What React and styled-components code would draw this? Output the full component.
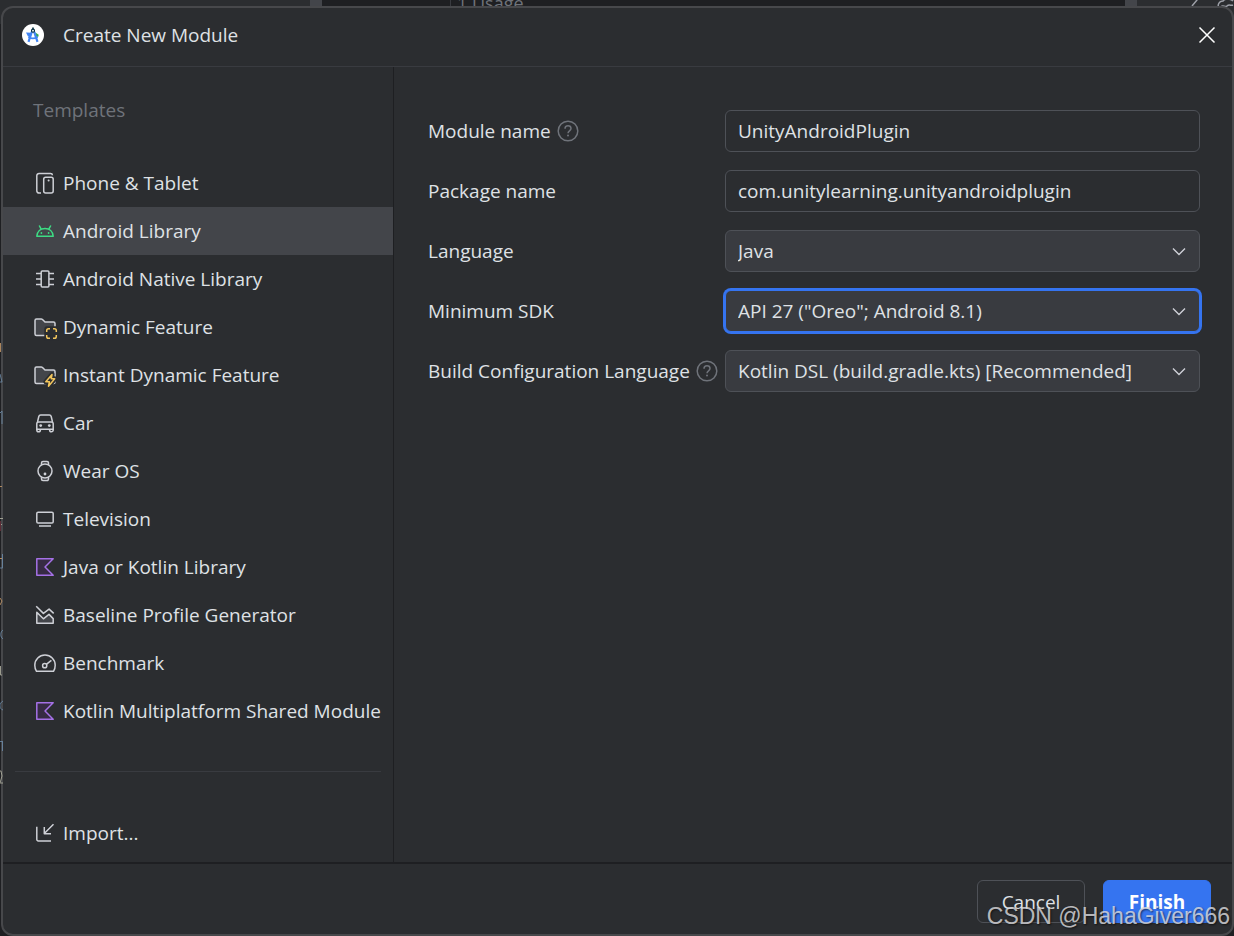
import styled, { createGlobalStyle, css } from "styled-components";

const GlobalStyle = createGlobalStyle`
  * {
    box-sizing: border-box;
  }

  body {
    margin: 0;
    background: #1e1f22;
    color: #dfe1e5;
    font-family: "Open Sans", "Noto Sans", sans-serif;
    font-size: 19px;
    line-height: 24px;
  }
`;

const Screen = styled.div`
  position: relative;
  display: flex;
  min-height: 100vh;
  padding: 6px 0 0 1px;
  overflow: hidden;
`;

/* slice of the editor that stays visible around the dialog */
const EditorTop = styled.div`
  position: absolute;
  top: 0;
  left: 0;
  right: 0;
  height: 24px;
  display: grid;
  grid-template-columns: 310px 12px 1fr 12px 97px;
  background: #2b2d30;
`;

const EditorGap = styled.div`
  background: ${({ $light }) => ($light ? "#43454a" : "#1e1f22")};
  padding-left: ${({ $light }) => ($light ? "0" : "128px")};
`;

const Usage = styled.span`
  display: block;
  border-left: 1px solid #393b40;
  padding-left: 6px;
  margin-top: -9px;
  font-size: 18px;
  color: #6f737a;
`;

const EditorTools = styled.div`
  display: flex;
  justify-content: flex-end;
  gap: 12px;
  color: #9da0a8;

  svg {
    margin-top: -8px;
  }
`;

const EditorEdge = styled.svg`
  position: absolute;
  top: 0;
  left: 0;
  width: 3px;
  height: 800px;
  fill: none;
  stroke-width: 1;
  opacity: 0.8;
`;

const Dialog = styled.div`
  position: relative;
  flex: 1;
  display: flex;
  flex-direction: column;
  min-width: 0;
  border: 2px solid #47484b;
  border-radius: 12px;
  background: #2b2d30;
  overflow: hidden;
`;

const Header = styled.header`
  display: flex;
  align-items: center;
  gap: 19px;
  height: 59px;
  padding: 0 16px 4px 19px;
  border-bottom: 1px solid #393b40;

  h1 {
    flex: 1;
    margin: 0;
    font-size: 19px;
    font-weight: 400;
  }
`;

const CloseButton = styled.button`
  display: flex;
  padding: 0;
  border: 0;
  background: none;
  color: #fff;
  cursor: pointer;
`;

const Body = styled.div`
  flex: 1;
  display: flex;
`;

const Sidebar = styled.nav`
  flex: 0 0 391px;
  padding-bottom: 5px;
  border-right: 1px solid #1e1f22;

  h2 {
    margin: 0;
    padding: 31px 30px 37px;
    font-size: 19px;
    font-weight: 400;
    color: #6f737a;
  }

  ul {
    margin: 0;
    padding: 0;
    list-style: none;
  }

  hr {
    margin: 36px 12px 37px;
    border: 0;
    border-top: 1px solid #393b40;
  }
`;

const Template = styled.button`
  display: flex;
  align-items: center;
  gap: 6px;
  width: 100%;
  height: 48px;
  padding: 0 0 0 30px;
  border: 0;
  background: ${({ $active }) => ($active ? "#43454a" : "transparent")};
  color: inherit;
  font: inherit;
  white-space: nowrap;
  cursor: pointer;
`;

const Icon = styled.svg.attrs({ viewBox: "0 0 24 24", "aria-hidden": true })`
  flex: none;
  width: 24px;
  height: 24px;
  overflow: visible;
  fill: none;
  stroke: ${({ $color }) => $color || "#ced0d6"};
  stroke-width: 1.5;
  stroke-linejoin: round;

  .solid {
    fill: #43454a;
  }

  .dot {
    fill: ${({ $color }) => $color || "#ced0d6"};
    stroke: none;
  }

  .accent {
    stroke: #f2c55c;
    fill: #2b2d30;
  }

  .backing {
    stroke: #2b2d30;
    stroke-width: 5;
  }
`;

const Form = styled.form`
  flex: 1;
  display: flex;
  flex-direction: column;
  gap: 18px;
  padding: 43px 32px 43px 34px;
`;

const Row = styled.div`
  display: grid;
  grid-template-columns: 297px 1fr;
  align-items: center;
`;

const Caption = styled.div`
  display: flex;
  align-items: center;
  gap: 6px;
  white-space: nowrap;
`;

const HelpButton = styled.button`
  display: flex;
  padding: 0;
  border: 0;
  background: none;
  cursor: pointer;
`;

const field = css`
  width: 100%;
  height: 42px;
  padding: 0 12px;
  border: 1px solid ${({ $focused }) => ($focused ? "#3574f0" : "#4e5157")};
  border-radius: 6px;
  box-shadow: ${({ $focused }) => ($focused ? "0 0 0 2px #3574f0" : "none")};
  color: inherit;
  font: inherit;
  outline: none;
`;

const TextInput = styled.input`
  ${field}
  background: #2b2d30;
`;

const SelectBox = styled.div`
  display: grid;
  align-items: center;

  select,
  svg {
    grid-area: 1 / 1;
  }

  svg {
    justify-self: end;
    margin-right: 14px;
    pointer-events: none;
  }
`;

const Select = styled.select`
  ${field}
  appearance: none;
  background: #393b40;
`;

const Footer = styled.footer`
  display: flex;
  justify-content: flex-end;
  gap: 18px;
  padding: 16px 21px 11px;
  border-top: 2px solid #1e1f22;
`;

const Button = styled.button`
  width: 108px;
  height: 43px;
  padding: 0;
  border: 1px solid ${({ $primary }) => ($primary ? "#3574f0" : "#4e5157")};
  border-radius: 6px;
  background: ${({ $primary }) => ($primary ? "#3574f0" : "transparent")};
  color: ${({ $primary }) => ($primary ? "#fff" : "inherit")};
  font: inherit;
  font-weight: ${({ $primary }) => ($primary ? 700 : 400)};
  cursor: pointer;
`;

const Watermark = styled.div`
  position: absolute;
  right: 4px;
  bottom: 6px;
  font-family: "Liberation Sans", Arial, sans-serif;
  font-size: 23px;
  line-height: 28px;
  color: rgba(225, 225, 228, 0.8);
  text-shadow: 1px 1px 2px rgba(0, 0, 0, 0.6);
  pointer-events: none;
`;

const PhoneIcon = () => (
  <Icon>
    <path d="M8 22H6a2.200 2.200 0 0 1-2.200-2.200V4.700A2.200 2.200 0 0 1 6 2.500h11.500a2 2 0 0 1 2 1.800" />
    <rect x="10.700" y="6.200" width="9.500" height="15.800" rx="2" />
    <circle className="dot" cx="15.600" cy="9.500" r="1" />
  </Icon>
);

const AndroidIcon = () => (
  <Icon $color="#3ddc84">
    <path d="M3.800 17.300C4.200 12.500 7.500 9.500 12 9.500s7.800 3 8.200 7.800z" />
    <path d="M6.200 6.500l2.100 3.900M17.800 6.500l-2.100 3.900" />
    <circle className="dot" cx="8.400" cy="14" r="0.900" />
    <circle className="dot" cx="15.600" cy="14" r="0.900" />
  </Icon>
);

const ChipIcon = () => (
  <Icon>
    <rect x="8.200" y="4" width="7.700" height="16" rx="1" />
    <path d="M3 6.500h5M3 12h5M3 17.500h5M16 6.500h5M16 12h5M16 17.500h5" />
  </Icon>
);

const Folder = () => (
  <path
    className="solid"
    d="M2 19V5.500A1.500 1.500 0 0 1 3.500 4h4.700a2 2 0 0 1 1.300.5L12 7h8.500A1.500 1.500 0 0 1 22 8.500V19a1.500 1.500 0 0 1-1.500 1.500h-17A1.500 1.500 0 0 1 2 19z"
  />
);

const DynamicIcon = () => (
  <Icon>
    <Folder />
    <rect x="13.800" y="13.800" width="9.500" height="9.500" className="backing" />
    <rect x="13" y="13" width="11" height="11" fill="#2b2d30" stroke="none" />
    <path
      className="accent"
      d="M13.700 17v-1.500a1.800 1.800 0 0 1 1.800-1.800H17M20 13.700h1.500a1.800 1.800 0 0 1 1.800 1.800V17M23.300 20v1.500a1.800 1.800 0 0 1-1.800 1.800H20M17 23.300h-1.500a1.800 1.800 0 0 1-1.800-1.800V20"
    />
  </Icon>
);

const InstantIcon = () => (
  <Icon>
    <Folder />
    <path className="backing" d="M19 11.500l-6.200 7.300h3.600l-.9 4.400 6.200-7.400h-3.500z" />
    <path className="accent" d="M19 11.500l-6.200 7.300h3.600l-.9 4.400 6.200-7.400h-3.500z" />
  </Icon>
);

const CarIcon = () => (
  <Icon>
    <path d="M4.500 11l1.300-5.500A2 2 0 0 1 7.700 4h8.600a2 2 0 0 1 1.900 1.500L19.500 11" />
    <path d="M3.800 18.200v-5.400a1.800 1.800 0 0 1 1.800-1.800h12.800a1.800 1.800 0 0 1 1.800 1.800v5.400z" />
    <path d="M3.800 18v1a1.700 1.700 0 0 0 3.600 0v-1M16.600 18v1a1.700 1.700 0 0 0 3.600 0v-1" />
    <circle className="dot" cx="7.700" cy="14.600" r="1.400" />
    <circle className="dot" cx="16.300" cy="14.600" r="1.400" />
  </Icon>
);

const WatchIcon = () => (
  <Icon>
    <circle cx="12" cy="12" r="7" />
    <path d="M8.500 6V3.900A1.500 1.500 0 0 1 10 2.400h4a1.500 1.500 0 0 1 1.500 1.500V6M8.500 18v2.100a1.500 1.500 0 0 0 1.500 1.500h4a1.500 1.500 0 0 0 1.500-1.500V18" />
    <circle className="dot" cx="12" cy="15" r="1.400" />
  </Icon>
);

const TvIcon = () => (
  <Icon>
    <rect x="3.800" y="5.200" width="16.400" height="10.800" rx="1.300" />
    <path d="M6 19h12" />
  </Icon>
);

const KotlinIcon = () => (
  <Icon $color="#a571e6">
    <path fill="#372b44" d="M3.800 3.800h16.400L12 12l8.200 8.200H3.800z" />
  </Icon>
);

const BaselineIcon = () => (
  <Icon>
    <path d="M3.200 3.200l7.200 7.200 5.700-4.300 4.600 4.300" />
    <path className="solid" d="M3.800 9.200l6.600 6.600 5.600-4.400 4.200 4.200v4.700H3.800z" />
  </Icon>
);

const BenchmarkIcon = () => (
  <Icon>
    <path d="M3.500 20.300C2.300 18.500 1.800 16.600 1.800 14.200a10.200 10.200 0 0 1 20.400 0c0 2.400-.5 4.300-1.700 6.100z" />
    <circle cx="11.700" cy="14.700" r="2.100" />
    <path d="M13.300 13.400l5.100-4" />
  </Icon>
);

const ImportIcon = () => (
  <Icon>
    <path d="M3.800 5.700v12.800a1.500 1.500 0 0 0 1.500 1.500H18" />
    <path d="M20.500 3.300l-9 9M11.300 6v6.700H18" />
  </Icon>
);

const ChevronIcon = () => (
  <svg width="14" height="14" viewBox="0 0 14 14" aria-hidden="true">
    <path d="M1 4.500l6 6 6-6" fill="none" stroke="#ced0d6" strokeWidth="1.400" />
  </svg>
);

const HelpIcon = () => (
  <svg width="22" height="22" viewBox="0 0 22 22" fill="none" stroke="#6f737a" strokeWidth="1.500">
    <circle cx="11" cy="11" r="9.800" />
    <path d="M8 8.700c0-1.700 1.300-2.900 3-2.900s3 1.100 3 2.700c0 2.300-3 2.300-3 4.700" />
    <circle cx="11" cy="15.500" r="1" fill="#6f737a" stroke="none" />
  </svg>
);

const StudioLogo = () => (
  <svg width="22" height="22" viewBox="0 0 22 22" aria-hidden="true">
    <circle cx="11" cy="11" r="11" fill="#fff" />
    <path d="M4 8.500l6 .3-1.500 5-2.600-1.500z" fill="#4285f4" />
    <path d="M13 8.200l3.700 2.600-.4 2-2.600.3z" fill="#34a853" />
    <path d="M10.300 6.500L6.500 17.800M11.700 6.500l3.800 11.300" stroke="#4285f4" strokeWidth="2.200" fill="none" />
    <path d="M6.500 13c2.600 1.800 6 1.800 9.200 0" stroke="#4285f4" strokeWidth="1.800" fill="none" />
    <path d="M11 3.500v2" stroke="#073042" strokeWidth="1.600" />
    <circle cx="11" cy="6.700" r="1.500" fill="#fff" stroke="#073042" strokeWidth="1.200" />
  </svg>
);

const templates = [
  { name: "Phone & Tablet", Glyph: PhoneIcon },
  { name: "Android Library", Glyph: AndroidIcon, active: true },
  { name: "Android Native Library", Glyph: ChipIcon },
  { name: "Dynamic Feature", Glyph: DynamicIcon },
  { name: "Instant Dynamic Feature", Glyph: InstantIcon },
  { name: "Car", Glyph: CarIcon },
  { name: "Wear OS", Glyph: WatchIcon },
  { name: "Television", Glyph: TvIcon },
  { name: "Java or Kotlin Library", Glyph: KotlinIcon },
  { name: "Baseline Profile Generator", Glyph: BaselineIcon },
  { name: "Benchmark", Glyph: BenchmarkIcon },
  { name: "Kotlin Multiplatform Shared Module", Glyph: KotlinIcon },
];

const FormRow = ({ id, label, help, children }) => (
  <Row>
    <Caption>
      <label htmlFor={id}>{label}</label>
      {help && (
        <HelpButton type="button" aria-label={`About ${label}`}>
          <HelpIcon />
        </HelpButton>
      )}
    </Caption>
    {children}
  </Row>
);

const Dropdown = ({ id, value, focused }) => (
  <SelectBox>
    <Select id={id} $focused={focused} defaultValue={value}>
      <option>{value}</option>
    </Select>
    <ChevronIcon />
  </SelectBox>
);

const App = () => {
  return <Screen>
    <GlobalStyle />

    <EditorTop aria-hidden="true">
      <div />
      <EditorGap $light />
      <EditorGap>
        <Usage>1 Usage</Usage>
      </EditorGap>
      <EditorGap $light />
      <EditorTools>
        <svg width="16" height="16" fill="none" stroke="currentColor" strokeWidth="1.500">
          <path d="M4 14l5-6V2" />
        </svg>
        <svg width="18" height="18" fill="none" stroke="currentColor" strokeWidth="1.500">
          <path d="M3 17c-2-4 0-8 4-8 2-3 8-2 10 0M5 15c2-3 4 1 6-1s4 0 6-1" />
        </svg>
      </EditorTools>
    </EditorTop>

    <Dialog role="dialog" aria-labelledby="dialog-title">
      <Header>
        <StudioLogo />
        <h1 id="dialog-title">Create New Module</h1>
        <CloseButton type="button" aria-label="Close">
          <svg width="18" height="18" viewBox="0 0 18 18" stroke="currentColor" strokeWidth="1.500">
            <path d="M1.500 1.500l15 15M16.500 1.500l-15 15" />
          </svg>
        </CloseButton>
      </Header>

      <Body>
        <Sidebar>
          <h2>Templates</h2>
          <ul>
            {templates.map(({ name, Glyph, active }) => (
              <li key={name}>
                <Template type="button" $active={active}>
                  <Glyph />
                  {name}
                </Template>
              </li>
            ))}
          </ul>
          <hr />
          <Template type="button">
            <ImportIcon />
            Import...
          </Template>
        </Sidebar>

        <Form id="module-form" onSubmit={(e) => e.preventDefault()}>
          <FormRow id="module" label="Module name" help>
            <TextInput id="module" type="text" defaultValue="UnityAndroidPlugin" />
          </FormRow>
          <FormRow id="package" label="Package name">
            <TextInput id="package" type="text" defaultValue="com.unitylearning.unityandroidplugin" />
          </FormRow>
          <FormRow id="language" label="Language">
            <Dropdown id="language" value="Java" />
          </FormRow>
          <FormRow id="sdk" label="Minimum SDK">
            <Dropdown id="sdk" value={'API 27 ("Oreo"; Android 8.1)'} focused />
          </FormRow>
          <FormRow id="build" label="Build Configuration Language" help>
            <Dropdown id="build" value="Kotlin DSL (build.gradle.kts) [Recommended]" />
          </FormRow>
        </Form>
      </Body>

      <Footer>
        <Button type="button">Cancel</Button>
        <Button type="submit" form="module-form" $primary>Finish</Button>
      </Footer>
    </Dialog>

    {/* ends of the code lines on the dialog's left border */}
    <EditorEdge aria-hidden="true">
      <path stroke="#cf9f6b" d="M.500 343v9M0 486.500h2M0 558.500h2M0 598l2 3-2 4" />
      <path stroke="#6f8fae" d="M0 374l2 8H0M0 413l2-2v13M2.500 554v14H0M0 741.500h3M2.500 742v9M3 701c-4 2-4 8 0 9M3 630c-3 2-3 7 0 9" />
      <path stroke="#b9b9a8" d="M.500 666v9H2M0 518.500h3M0 524.500h2M0 771h1l1 5-2 7h3" />
      <path stroke="#6b2f3a" d="M.500 521v10" />
    </EditorEdge>

    <Watermark>CSDN @HahaGiver666</Watermark>
  </Screen>;
};

export default App;
